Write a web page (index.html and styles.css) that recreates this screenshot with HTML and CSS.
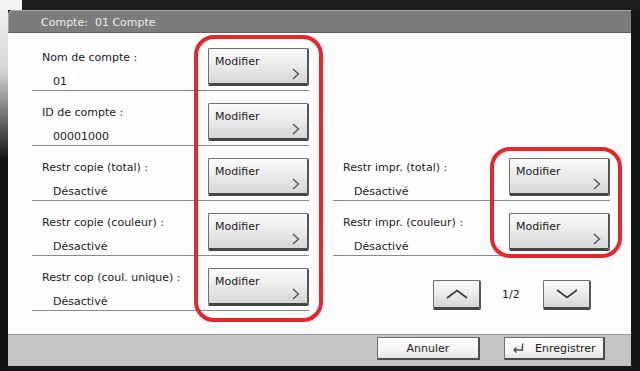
FILE: index.html
```html
<!DOCTYPE html>
<html lang="fr">
<head>
<meta charset="utf-8">
<title>Compte</title>
<link rel="stylesheet" href="styles.css">
</head>
<body>
<div class="screen">
  <div class="panel">
    <div class="header"><span class="title">Compte:&nbsp; 01 Compte</span></div>
    <div class="content">
      <div class="col">
        <div class="item">
          <div class="info"><div class="label">Nom de compte :</div><div class="value">01</div></div>
          <button class="mod"><span>Modifier</span><svg class="chev" width="8" height="12" viewBox="0 0 8 12"><polyline points="1,1 6.5,6 1,11" /></svg></button>
        </div>
        <div class="item">
          <div class="info"><div class="label">ID de compte :</div><div class="value">00001000</div></div>
          <button class="mod"><span>Modifier</span><svg class="chev" width="8" height="12" viewBox="0 0 8 12"><polyline points="1,1 6.5,6 1,11" /></svg></button>
        </div>
        <div class="item">
          <div class="info"><div class="label">Restr copie (total) :</div><div class="value">Désactivé</div></div>
          <button class="mod"><span>Modifier</span><svg class="chev" width="8" height="12" viewBox="0 0 8 12"><polyline points="1,1 6.5,6 1,11" /></svg></button>
        </div>
        <div class="item">
          <div class="info"><div class="label">Restr copie (couleur) :</div><div class="value">Désactivé</div></div>
          <button class="mod"><span>Modifier</span><svg class="chev" width="8" height="12" viewBox="0 0 8 12"><polyline points="1,1 6.5,6 1,11" /></svg></button>
        </div>
        <div class="item">
          <div class="info"><div class="label">Restr cop (coul. unique) :</div><div class="value">Désactivé</div></div>
          <button class="mod"><span>Modifier</span><svg class="chev" width="8" height="12" viewBox="0 0 8 12"><polyline points="1,1 6.5,6 1,11" /></svg></button>
        </div>
      </div>
      <div class="col">
        <div class="item empty"></div>
        <div class="item empty"></div>
        <div class="item">
          <div class="info"><div class="label">Restr impr. (total) :</div><div class="value">Désactivé</div></div>
          <button class="mod"><span>Modifier</span><svg class="chev" width="8" height="12" viewBox="0 0 8 12"><polyline points="1,1 6.5,6 1,11" /></svg></button>
        </div>
        <div class="item">
          <div class="info"><div class="label">Restr impr. (couleur) :</div><div class="value">Désactivé</div></div>
          <button class="mod"><span>Modifier</span><svg class="chev" width="8" height="12" viewBox="0 0 8 12"><polyline points="1,1 6.5,6 1,11" /></svg></button>
        </div>
        <div class="pager">
          <button class="nav"><svg width="22" height="10" viewBox="0 0 22 10"><polyline points="1,9 11,1.5 21,9" /></svg></button>
          <span class="page">1/2</span>
          <button class="nav"><svg width="22" height="10" viewBox="0 0 22 10"><polyline points="1,1 11,8.5 21,1" /></svg></button>
        </div>
      </div>
      <div class="mark mark-left"></div>
      <div class="mark mark-right"></div>
    </div>
    <div class="footer">
      <button class="fbtn cancel">Annuler</button>
      <button class="fbtn save"><svg class="enter" width="12" height="10" viewBox="0 0 12 10"><path d="M10.5 0.5 V7 H2" /><path d="M4.5 4.5 L2 7 L4.5 9.5" /></svg><span>Enregistrer</span></button>
    </div>
  </div>
</div>
</body>
</html>
```

FILE: styles.css
```css
* { box-sizing: border-box; }

html, body {
  margin: 0;
  padding: 0;
  background: #ffffff;
}

body {
  font-family: "DejaVu Sans", Verdana, sans-serif;
  font-size: 11px;
  color: #222222;
}

.screen {
  width: 640px;
  height: 371px;
  padding: 10px 9px 5px 8px;
  background:
    linear-gradient(90deg, #f4f4f4 0 22px, #1e1e1e 22px) top left / 100% 10px no-repeat,
    linear-gradient(180deg, #f2f2f2 0, #d6d6d6 70px, #121212 160px) top left / 8px 100% no-repeat,
    #161616;
}

.panel {
  width: 623px;
  height: 356px;
  display: flex;
  flex-direction: column;
  background: #fdfdfd;
  border-top-left-radius: 5px;
  overflow: hidden;
}

.header {
  height: 23px;
  flex: none;
  background: #7c7c7c;
  border-top: 1px solid #a9a9a9;
  border-left: 1px solid #a0a0a0;
  border-bottom: 1px solid #5e5e5e;
  border-top-left-radius: 5px;
  padding-left: 32px;
  display: flex;
  align-items: center;
}

.title {
  color: #ececec;
  font-size: 11px;
  padding-top: 1px;
}

.content {
  position: relative;
  flex: 1;
  display: flex;
  gap: 24px;
  padding: 3px 0 0 24px;
  background: #fdfdfd;
}

.col {
  width: 277px;
  display: flex;
  flex-direction: column;
}

.item {
  height: 55px;
  flex: none;
  display: flex;
  justify-content: space-between;
  border-bottom: 1px solid #8a8a8a;
}

.item.empty {
  border-bottom: none;
}

.info {
  padding-left: 10px;
}

.label {
  margin-top: 15px;
  line-height: 14px;
  white-space: nowrap;
}

.value {
  margin-top: 10px;
  padding-left: 11px;
  line-height: 14px;
}

.mod {
  position: relative;
  margin-top: 12px;
  width: 101px;
  height: 38px;
  padding: 0;
  font-family: inherit;
  font-size: 11px;
  color: #1a1a1a;
  text-align: left;
  background: linear-gradient(180deg, #fbfbfb 0%, #ececec 45%, #d6d6d6 100%);
  border: 1px solid #6e6e6e;
  border-right: 2px solid #555555;
  border-bottom: 3px solid #454545;
  border-radius: 2px;
  display: flex;
  flex-direction: column;
  justify-content: space-between;
}

.mod span {
  padding: 6px 0 0 6px;
  line-height: 13px;
}

.chev {
  align-self: flex-end;
  margin: 0 7px 3px 0;
}

.chev polyline {
  fill: none;
  stroke: #555555;
  stroke-width: 1.4;
}

.pager {
  display: flex;
  align-items: center;
  padding: 24px 0 0 100px;
}

.nav {
  width: 48px;
  height: 30px;
  padding: 0;
  background: linear-gradient(180deg, #fbfbfb 0%, #ececec 45%, #d6d6d6 100%);
  border: 1px solid #6e6e6e;
  border-right: 2px solid #555555;
  border-bottom: 3px solid #454545;
  border-radius: 2px;
  display: flex;
  align-items: center;
  justify-content: center;
}

.nav polyline {
  fill: none;
  stroke: #3a3a3a;
  stroke-width: 1.6;
}

.page {
  width: 62px;
  padding-left: 21px;
  line-height: 14px;
}

.mark {
  position: absolute;
  border: 4px solid #e6262d;
  border-radius: 20px;
  pointer-events: none;
}

.mark-left {
  left: 186px;
  top: 2px;
  width: 129px;
  height: 287px;
}

.mark-right {
  left: 482px;
  top: 114px;
  width: 132px;
  height: 111px;
}

.footer {
  height: 32px;
  flex: none;
  background: #c4c4c4;
  border-top: 1px solid #9a9a9a;
  display: flex;
  justify-content: flex-end;
  align-items: flex-start;
  gap: 24px;
  padding: 2px 26px 0 0;
}

.fbtn {
  height: 23px;
  padding: 0;
  font-family: inherit;
  font-size: 11px;
  color: #1a1a1a;
  background: linear-gradient(180deg, #ffffff 0%, #f2f2f2 70%, #e4e4e4 100%);
  border: 1px solid #6e6e6e;
  border-right: 2px solid #4c4c4c;
  border-bottom: 2px solid #4c4c4c;
  border-radius: 1px;
  display: flex;
  align-items: center;
  justify-content: center;
}

.cancel {
  width: 103px;
}

.save {
  width: 101px;
  justify-content: flex-start;
  padding-left: 7px;
}

.save span {
  margin-left: 11px;
}

.enter path {
  fill: none;
  stroke: #444444;
  stroke-width: 1.3;
}
```
